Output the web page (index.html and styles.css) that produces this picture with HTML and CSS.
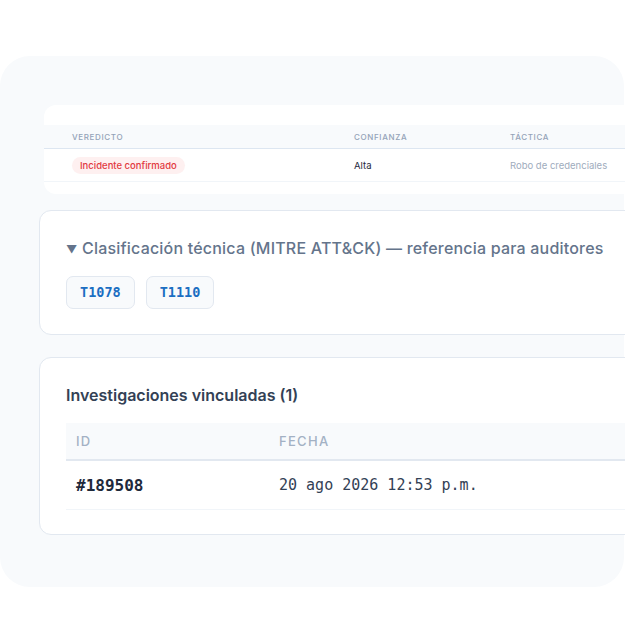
FILE: index.html
```html
<!DOCTYPE html>
<html lang="es">
<head>
<meta charset="utf-8">
<title>Incidente</title>
<link rel="stylesheet" href="styles.css">
</head>
<body>
<div class="panel">
  <div class="card card-verdict">
    <div class="vt-row vt-head"><span>VEREDICTO</span><span>CONFIANZA</span><span>TÁCTICA</span></div>
    <div class="vt-row vt-body">
      <span><span class="badge">Incidente confirmado</span></span>
      <span class="strong">Alta</span>
      <span class="muted">Robo de credenciales</span>
    </div>
  </div>
  <details class="card card-box card-class" open>
    <summary><span class="caret">▼</span>Clasificación técnica (MITRE ATT&amp;CK) — referencia para auditores</summary>
    <div class="tags"><span class="tag">T1078</span><span class="tag">T1110</span></div>
  </details>
  <section class="card card-box card-inv">
    <h3 class="inv-title">Investigaciones vinculadas (1)</h3>
    <div class="it-row it-head"><span>ID</span><span>FECHA</span></div>
    <div class="it-row it-body"><span class="inv-id">#189508</span><span class="inv-date">20 ago 2026 12:53 p.m.</span></div>
  </section>
</div>
</body>
</html>
```
FILE: styles.css
```css
html, body {
  margin: 0;
  padding: 0;
  background: #ffffff;
  overflow: hidden;
}
body {
  width: 625px;
  height: 625px;
  font-family: Inter, "Noto Sans", "Liberation Sans", sans-serif;
  color: #1e293b;
}
.panel {
  margin-top: 56px;
  width: 624px;
  height: 531px;
  box-sizing: border-box;
  padding: 49px 0 0 39px;
  background: #f8fafc;
  border-radius: 30px;
}
.card {
  width: 640px;
  background: #ffffff;
  border-radius: 12px;
  box-sizing: border-box;
}
.card-verdict {
  margin-left: 5px;
  width: 635px;
  padding: 20px 0 12px;
}
.vt-row {
  display: grid;
  grid-template-columns: 282px 156px 1fr;
  align-items: center;
  padding-left: 28px;
}
.vt-head {
  height: 23px;
  background: #f8fafc;
  border-bottom: 1px solid #dde6f1;
  font-size: 8px;
  font-weight: 500;
  letter-spacing: 0.08em;
  color: #94a3b8;
}
.vt-body {
  height: 32px;
  border-bottom: 1px solid #f1f5f9;
  font-size: 9.5px;
}
.badge {
  display: inline-block;
  height: 17px;
  line-height: 17px;
  padding: 0 8px;
  border-radius: 9px;
  background: #fef0f0;
  color: #e23a3f;
  font-weight: 500;
}
.strong { color: #1e293b; }
.muted { color: #a0acbd; }

.card-box {
  border: 1px solid #e2e8f0;
  margin-top: 16px;
  padding: 26px 26px 25px;
}
.card-box summary {
  list-style: none;
  font-size: 16px;
  letter-spacing: 0.2px;
  line-height: 22px;
  font-weight: 500;
  color: #64748b;
  white-space: nowrap;
  cursor: pointer;
}
.card-box summary::-webkit-details-marker { display: none; }
.caret {
  display: inline-block;
  width: 16px;
  font-size: 11px;
  letter-spacing: 0;
  vertical-align: 1px;
}
.tags {
  display: flex;
  gap: 11px;
  margin-top: 16px;
}
.tag {
  padding: 6px 13px;
  line-height: 19px;
  font-family: "DejaVu Sans Mono", "Liberation Mono", monospace;
  font-size: 13.5px;
  font-weight: 700;
  color: #1b6ec2;
  background: #f8fafc;
  border: 1px solid #e2e8f0;
  border-radius: 7px;
}
.card-inv {
  margin-top: 22px;
  padding-bottom: 24px;
}
.inv-title {
  margin: 0 0 17px;
  font-size: 16px;
  line-height: 22px;
  font-weight: 600;
  color: #334155;
}
.it-row {
  display: grid;
  grid-template-columns: 203px 1fr;
  align-items: center;
  padding-left: 10px;
}
.it-head {
  height: 36px;
  background: #f8fafc;
  border-bottom: 2px solid #e2e8f0;
  font-size: 13px;
  font-weight: 500;
  letter-spacing: 0.1em;
  color: #a3b1c4;
}
.it-body {
  height: 48px;
  border-bottom: 1px solid #f1f5f9;
}
.inv-id {
  font-family: "DejaVu Sans Mono", "Liberation Mono", monospace;
  font-size: 16px;
  font-weight: 700;
  color: #1e293b;
}
.inv-date {
  font-family: "DejaVu Sans Mono", "Liberation Mono", monospace;
  font-size: 15px;
  color: #334155;
}
```
